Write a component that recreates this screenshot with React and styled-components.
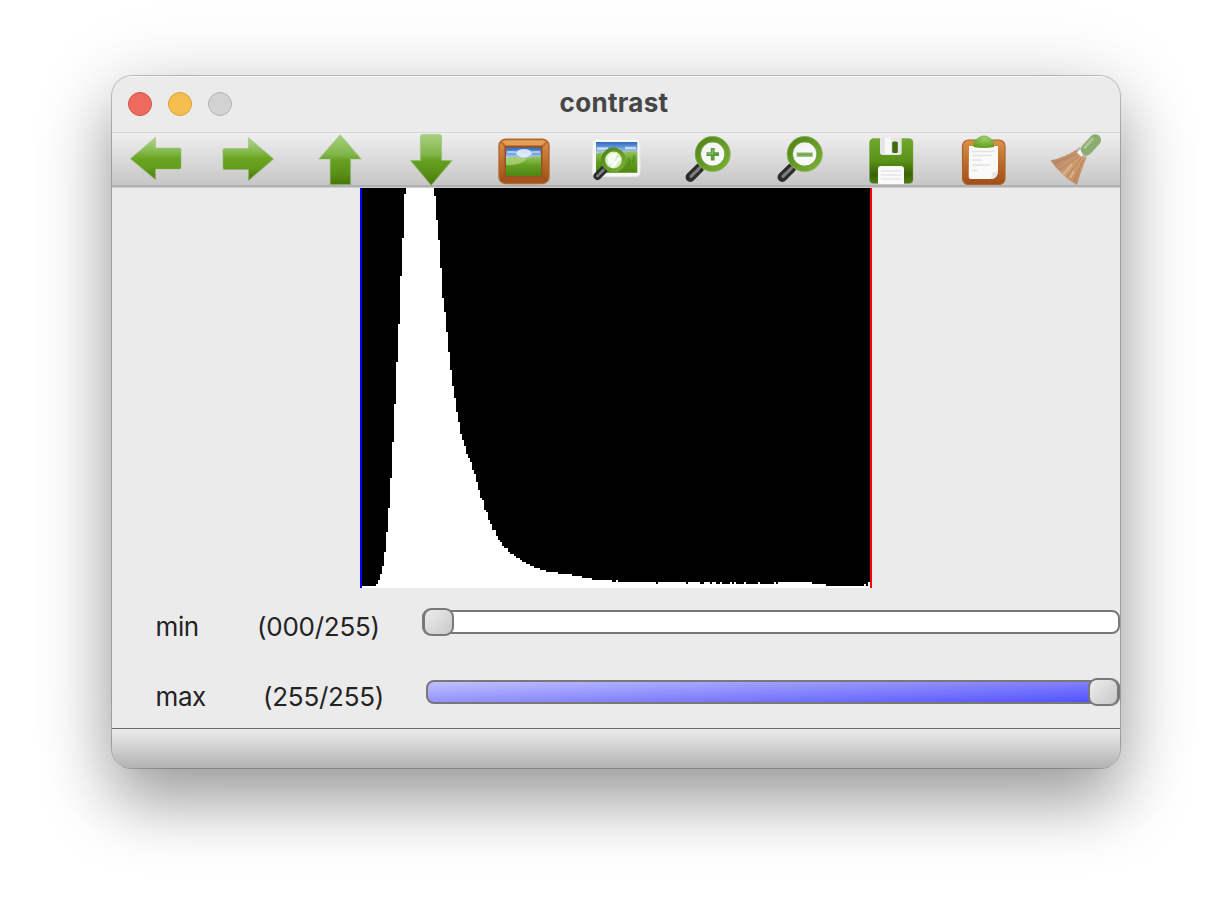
import React from "react";
import styled, { createGlobalStyle } from "styled-components";

const GlobalStyle = createGlobalStyle`
  * { box-sizing: border-box; }
  body {
    margin: 0;
    background: #fff;
    font-family: Inter, "Liberation Sans", sans-serif;
    overflow: hidden;
  }
`;

const Desktop = styled.main`
  width: 1232px;
  height: 916px;
  padding: 76px 0 0 112px;
`;

const Window = styled.section`
  width: 1008px;
  height: 692px;
  display: flex;
  flex-direction: column;
  background: #ebebeb;
  border-radius: 20px;
  overflow: hidden;
  box-shadow:
    0 0 0 1px rgba(0, 0, 0, 0.22),
    0 34px 66px rgba(0, 0, 0, 0.35),
    0 4px 90px rgba(0, 0, 0, 0.11);
`;

const TitleBar = styled.header`
  height: 56px;
  flex: none;
  display: grid;
  grid-template-columns: 160px 1fr 160px;
  align-items: center;
  box-shadow: inset 0 1px 0 #f6f6f6;
`;

const Lights = styled.div`
  display: flex;
  gap: 16px;
  padding-left: 16px;
`;

const Light = styled.span`
  width: 24px;
  height: 24px;
  border-radius: 50%;
  background: ${(p) => p.$fill};
  border: 1px solid ${(p) => p.$edge};
`;

const Title = styled.h1`
  margin: 0;
  padding: 0 4px 2px 0;
  text-align: center;
  font-size: 26px;
  line-height: 30px;
  font-weight: 700;
  letter-spacing: 0.3px;
  color: #464646;
`;

const Toolbar = styled.nav`
  height: 55px;
  margin-bottom: 1px;
  flex: none;
  display: flex;
  gap: 40px;
  padding: 1px 0 0 18px;
  border-top: 1px solid #d5d5d5;
  border-bottom: 2px solid #b0b0b0;
  background: linear-gradient(#efefef, #c6c6c6);
  box-shadow: 0 1px 0 #cfcfcf;
`;

const ToolButton = styled.button`
  width: 52px;
  height: 52px;
  flex: none;
  padding: 0;
  border: 0;
  background: none;
  svg { display: block; overflow: visible; }
`;

const Plot = styled.div`
  height: 400px;
  flex: none;
  display: flex;
  justify-content: center;
  svg { display: block; }
`;

const Controls = styled.div`
  display: flex;
  flex-direction: column;
  height: 140px;
  flex: none;
`;

const ControlRow = styled.label`
  height: 70px;
  display: flex;
  align-items: flex-start;
  padding: 20px 0 0 43.5px;
  color: #232323;
  font-size: 26px;
  line-height: 38px;
`;

const Name = styled.span`
  width: ${(p) => p.$width}px;
  letter-spacing: -0.4px;
`;

const Value = styled.span`
  width: ${(p) => p.$width}px;
  letter-spacing: -0.25px;
  white-space: nowrap;
`;

const Track = styled.span`
  flex: 1;
  height: 24px;
  margin-top: 2px;
  display: flex;
  align-items: center;
  justify-content: ${(p) => (p.$full ? "flex-end" : "flex-start")};
  border: 2px solid #787878;
  border-radius: 8px;
  background: ${(p) => (p.$full ? "linear-gradient(177.5deg, #c0c0ff 0%, #5050ff 100%)" : "#fff")};
`;

const Thumb = styled.span`
  width: 31px;
  height: 28px;
  flex: none;
  margin: ${(p) => (p.$full ? "0 -1px 0 0" : "0 0 0 -1px")};
  border: 2px solid #787878;
  border-radius: 9px;
  background: linear-gradient(135deg, #eee, #c8c8c8);
  box-shadow: ${(p) => (p.$full ? "1px" : "-1px")} 0 0 #787878;
`;

const StatusBar = styled.footer`
  flex: 1;
  border-top: 1px solid #6c6c6c;
  background: linear-gradient(#ececec, #b2b2b2);
`;

const GradientSheet = styled.svg`
  position: absolute;
  width: 0;
  height: 0;
`;

/* x / y pairs where each histogram step begins */
const STEPS = [
  [362, 586], [376, 584], [378, 580], [380, 574], [382, 566], [384, 552], [386, 532], [388, 508],
  [390, 478], [392, 442], [394, 404], [396, 362], [398, 324], [400, 276], [402, 238], [404, 194],
  [406, 188], [434, 196], [436, 220], [438, 240], [440, 268], [442, 298], [444, 312], [446, 332],
  [448, 352], [450, 370], [452, 386], [454, 398], [456, 412], [458, 422], [460, 434], [462, 440],
  [464, 446], [466, 454], [468, 458], [470, 462], [472, 470], [474, 474], [476, 482], [478, 490],
  [480, 498], [482, 500], [484, 510], [486, 512], [488, 520], [490, 524], [492, 530], [496, 536],
  [498, 540], [500, 542], [502, 546], [504, 548], [508, 552], [510, 554], [514, 556], [516, 558],
  [520, 560], [522, 562], [526, 564], [530, 566], [534, 568], [540, 570], [546, 572], [558, 574],
  [572, 576], [582, 578], [592, 580], [612, 582], [616, 580], [618, 582], [656, 584], [658, 582],
  [686, 584], [688, 582], [700, 584], [704, 582], [710, 584], [712, 582], [716, 584], [720, 582],
  [722, 584], [730, 582], [732, 584], [734, 582], [736, 584], [744, 582], [746, 584], [758, 582],
  [760, 584], [774, 582], [776, 584], [778, 582], [812, 584], [826, 586], [864, 584], [866, 586],
  [868, 582],
];

const histogramPath =
  "M2 400" + STEPS.map(([x, y]) => `H${x - 360}V${y - 188}`).join("") + "H510V400Z";

function Histogram() {
  return (
    <svg width="512" height="400" shapeRendering="crispEdges">
      <rect width="512" height="400" fill="#000" />
      <path d={histogramPath} fill="#fff" />
      <rect width="2" height="400" fill="#00f" />
      <rect x="510" width="2" height="400" fill="#f00" />
    </svg>
  );
}

const Defs = () => (
  <GradientSheet aria-hidden="true">
    <defs>
      <linearGradient id="arrow" gradientUnits="userSpaceOnUse" x1="0" y1="2" x2="0" y2="47">
        <stop offset="0" stopColor="#b9dc93" />
        <stop offset=".34" stopColor="#86b94f" />
        <stop offset=".5" stopColor="#69a51f" />
        <stop offset=".7" stopColor="#649d1c" />
        <stop offset="1" stopColor="#4a7309" />
      </linearGradient>
      <linearGradient id="arrowTall" gradientUnits="userSpaceOnUse" x1="0" y1="0" x2="0" y2="52">
        <stop offset="0" stopColor="#a9d281" />
        <stop offset=".4" stopColor="#80b548" />
        <stop offset=".5" stopColor="#66a120" />
        <stop offset=".75" stopColor="#5a9018" />
        <stop offset="1" stopColor="#487407" />
      </linearGradient>
      <linearGradient id="wood" x1="0" y1="0" x2="0" y2="1">
        <stop offset="0" stopColor="#dc9247" />
        <stop offset=".5" stopColor="#bd6b2b" />
        <stop offset="1" stopColor="#a04f1a" />
      </linearGradient>
      <linearGradient id="sky" x1="0" y1="0" x2="0" y2="1">
        <stop offset="0" stopColor="#2f6cc4" />
        <stop offset=".2" stopColor="#6f9fdb" />
        <stop offset=".4" stopColor="#c9ddf3" />
        <stop offset="1" stopColor="#e7f2fa" />
      </linearGradient>
      <linearGradient id="hill" x1="0" y1="0" x2="0" y2="1">
        <stop offset="0" stopColor="#97c55c" />
        <stop offset=".45" stopColor="#62a024" />
        <stop offset="1" stopColor="#4c8710" />
      </linearGradient>
      <linearGradient id="floppy" x1="0" y1="0" x2="0" y2="1">
        <stop offset="0" stopColor="#71a92f" />
        <stop offset=".5" stopColor="#5a9218" />
        <stop offset=".8" stopColor="#3a6204" />
        <stop offset="1" stopColor="#4d7d12" />
      </linearGradient>
      <linearGradient id="ring" x1="0" y1="0" x2="1" y2="1">
        <stop offset="0" stopColor="#528419" />
        <stop offset="1" stopColor="#79ae35" />
      </linearGradient>
      <linearGradient id="paper" x1="0" y1="0" x2="1" y2="1">
        <stop offset="0" stopColor="#f0f0f0" />
        <stop offset="1" stopColor="#ffffff" />
      </linearGradient>
      <radialGradient id="clip" cx=".55" cy=".25" r=".8">
        <stop offset="0" stopColor="#9ccc68" />
        <stop offset="1" stopColor="#5f9b1c" />
      </radialGradient>
      <linearGradient id="straw" x1="0" y1="0" x2="1" y2="1">
        <stop offset="0" stopColor="#ae7f5f" />
        <stop offset=".55" stopColor="#d09d73" />
        <stop offset="1" stopColor="#b78157" />
      </linearGradient>
    </defs>
  </GradientSheet>
);

const Icon = ({ children }) => (
  <svg width="52" height="52" viewBox="0 0 52 52" fill="none">{children}</svg>
);

const Arrow = ({ d, tall }) => (
  <Icon>
    <path d={d} fill={tall ? "url(#arrowTall)" : "url(#arrow)"} stroke="#8fb86a" strokeOpacity=".45" strokeWidth="1.2" strokeLinejoin="round" />
  </Icon>
);

const PictureIcon = () => (
  <Icon>
    <rect x="1" y="5.2" width="50" height="44.300" rx="6.500" fill="url(#wood)" stroke="#b06a35" strokeWidth="1.4" />
    <path d="M5 7h42l-3 4H8z" fill="#e8ab60" opacity=".7" />
    <path d="M3 8l5 5M49 8l-5 5M3 47l5-5M49 47l-5-5" stroke="#8b4315" strokeOpacity=".45" strokeWidth="1.5" />
    <rect x="6.500" y="11.800" width="38" height="31.700" rx="1" fill="#965024" />
    <rect x="8" y="13.700" width="35" height="28.300" fill="url(#sky)" />
    <ellipse cx="26" cy="19" rx="8" ry="4" fill="#fff" opacity=".75" />
    <path d="M9 18h9M34 18h8" stroke="#fff" strokeOpacity=".5" strokeWidth="2" />
    <path d="M8 24.500q8-3 17 0 9-2 18-2v19.500H8z" fill="url(#hill)" />
    <path d="M8 31q13 1 21-6-10-3-21-.5z" fill="#b2d97f" opacity=".7" />
  </Icon>
);

const Handle = ({ d, width }) => (
  <>
    <path d={d} stroke="#2c2c2c" strokeWidth={width} strokeLinecap="round" />
    <path d={d} stroke="#7d7d7d" strokeWidth={width / 3} strokeLinecap="round" strokeDasharray="5 2" />
  </>
);

const PictureSearchIcon = () => (
  <Icon>
    <rect x="2.500" y="5" width="47.500" height="37.500" rx="4" fill="#f8f8f6" stroke="#e9e9e6" />
    <rect x="6" y="8" width="41.300" height="30.800" fill="url(#sky)" />
    <path d="M7 14.500h11M22 15.500h8M35 14h11" stroke="#fff" strokeOpacity=".6" strokeWidth="2.500" />
    <path d="M6 19.500q10-3 20 0 10-3 21.300-2v21.300H6z" fill="url(#hill)" />
    <path d="M38 24l2 3-2 5M44 21l-1 8M9 28l3 2" stroke="#3f7910" strokeOpacity=".5" strokeWidth="1.500" />
    <Handle d="M13.500 36L7.500 42" width={8} />
    <circle cx="23.500" cy="26" r="10.400" fill="#d5edbf" stroke="url(#ring)" strokeWidth="4" />
    <path d="M17.500 23q5-6 10-3l-4 9-5 2z" fill="#fff" opacity=".8" />
    <path d="M22 33l8-9" stroke="#fff" strokeWidth="3" />
  </Icon>
);

const ZoomIcon = ({ children }) => (
  <Icon>
    <Handle d="M17.500 34L8.300 43.200" width={9.500} />
    <circle cx="30.700" cy="20" r="14.800" fill="url(#paper)" stroke="url(#ring)" strokeWidth="6" />
    <circle cx="30.700" cy="20" r="17.500" stroke="#94be66" strokeOpacity=".65" />
    <circle cx="30.700" cy="20" r="12.200" stroke="#79a645" strokeOpacity=".7" />
    {children}
  </Icon>
);

const SaveIcon = () => (
  <Icon>
    <path d="M8 4.500h35q4 0 4 4v37q0 4-4 4H7.500q-4 0-4-4V9q0-4.500 4.500-4.500z" fill="url(#floppy)" stroke="#7fa75a" strokeOpacity=".5" />
    <path d="M14 4h21.700v14.500q0 2.500-2.500 2.500H16.500q-2.500 0-2.500-2.500z" fill="#e6e6e6" />
    <path d="M19 4h6v16h-6z" fill="#fff" opacity=".7" />
    <rect x="26.200" y="7.500" width="5.600" height="11.500" rx="1.500" fill="#3c6d0a" />
    <path d="M12 50V35q0-3 3-3h20q3 0 3 3v15z" fill="#fafafa" />
    <path d="M15 37h20M15 41h20M15 45h20" stroke="#dcdcdc" strokeWidth="1.200" />
  </Icon>
);

const ClipboardIcon = () => (
  <Icon>
    <rect x="4.500" y="6" width="42.500" height="44.500" rx="6" fill="url(#wood)" stroke="#aa652f" strokeWidth="1.200" />
    <path d="M11 12h29v24q0 9-8 9H13q-2.300 0-2.300-2.300z" fill="#fafafa" />
    <path d="M40 36.500q0 8.500-7.500 8.500 2-3 1.500-6.500 3.500.5 6-2z" fill="#e6e6e6" />
    <path d="M14 17.500h23M14 21.500h20M14 26h10M14 31h18M14 36.500h6" stroke="#e2e2e2" strokeWidth="1.500" />
    <path d="M15.500 13V8q0-2 3-3 3.500-3.500 7.500-3.500t7.500 3.500q2.500 1 2.500 3v5q-10 2-20.500 0z" fill="url(#clip)" />
  </Icon>
);

const BroomIcon = () => (
  <Icon>
    <path d="M.5 26.500q14-3 26-11L36.500 24q-5 11-9.500 27Q12 43 .5 26.500z" fill="url(#straw)" />
    <path d="M5 29l22-9M10 36l19-14M17 43l14-19M24 48l9-22" stroke="#9c6a44" strokeOpacity=".3" strokeWidth="1.500" />
    <path d="M13 41l9-11M20 44l4-7" stroke="#e8c39a" strokeOpacity=".6" strokeWidth="2" />
    <path d="M27.500 14.500L36.500 22.500" stroke="#b5b5b2" strokeWidth="5" />
    <path d="M28.500 17L33 21" stroke="#f4f4f3" strokeWidth="4.500" />
    <path d="M36.500 15.500L45.300 6" stroke="#8cad70" strokeWidth="11.500" strokeLinecap="round" />
    <path d="M34.800 13.500L42.500 5" stroke="#adc596" strokeWidth="3" strokeLinecap="round" />
  </Icon>
);

const TOOLS = [
  ["Back", <Arrow d="M.5 24.700L25.500 3.500V14H49.500Q51 14 51 15.500V33.500Q51 35 49.500 35H25.500V45.500Z" />],
  ["Forward", <Arrow d="M51.500 25L26.500 4V14.500H2.500Q1 14.500 1 16V34Q1 35.500 2.500 35.500H26.500V46.500Z" />],
  ["Up", <Arrow tall d="M26.300 1L47 25H36.500V50.500H16.200V25H5Z" />],
  ["Down", <Arrow tall d="M25.200 51.300L46 26.500H35.500V3Q35.500.5 33 .5H17Q14.500.5 14.500 3V26.500H4.500Z" />],
  ["Original size", <PictureIcon />],
  ["Zoom image", <PictureSearchIcon />],
  ["Zoom in", (
    <ZoomIcon>
      <path d="M30.700 14v12.500M24.500 20.200h12.500" stroke="#5b9c3c" strokeWidth="3.800" />
      <path d="M30.700 15.500v5M26 19.700h5" stroke="#8abd70" strokeWidth="1.200" />
    </ZoomIcon>
  )],
  ["Zoom out", (
    <ZoomIcon>
      <rect x="22.700" y="18.500" width="16" height="4.300" fill="#83b665" />
      <rect x="24" y="19.800" width="13.500" height="1.500" fill="#6fa84d" />
    </ZoomIcon>
  )],
  ["Save", <SaveIcon />],
  ["Copy", <ClipboardIcon />],
  ["Clear", <BroomIcon />],
];

export default function App() {
  return (
    <>
      <GlobalStyle />
      <Defs />
      <Desktop>
        <Window>
          <TitleBar>
            <Lights>
              <Light $fill="#ed6a5e" $edge="#d5544a" />
              <Light $fill="#f5bf4f" $edge="#d8a13d" />
              <Light $fill="#d2d2d2" $edge="#b5b5b5" />
            </Lights>
            <Title>contrast</Title>
          </TitleBar>
          <Toolbar>
            {TOOLS.map(([label, icon]) => (
              <ToolButton key={label} aria-label={label}>{icon}</ToolButton>
            ))}
          </Toolbar>
          <Plot><Histogram /></Plot>
          <Controls>
            <ControlRow>
              <Name $width={101.5}>min</Name>
              <Value $width={165}>(000/255)</Value>
              <Track><Thumb /></Track>
            </ControlRow>
            <ControlRow>
              <Name $width={107.5}>max</Name>
              <Value $width={163}>(255/255)</Value>
              <Track $full><Thumb $full /></Track>
            </ControlRow>
          </Controls>
          <StatusBar />
        </Window>
      </Desktop>
    </>
  );
}
